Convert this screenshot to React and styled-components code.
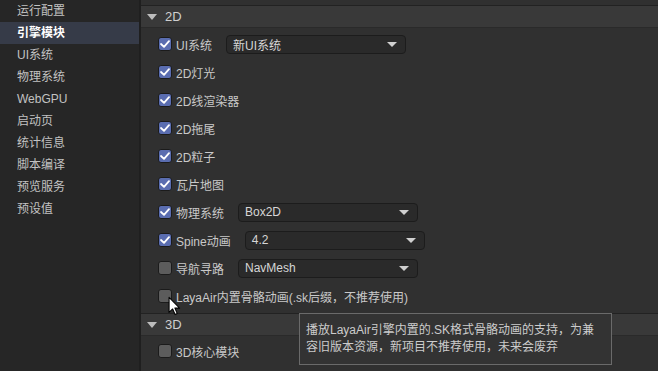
import React from "react";
import styled, { createGlobalStyle } from "styled-components";

const Global = createGlobalStyle`
  html, body { margin: 0; padding: 0; background: #303030; }
  body { font-family: "Liberation Sans", "Noto Sans CJK SC", sans-serif; font-size: 12px; }
  * { box-sizing: border-box; }
`;

const Page = styled.div`
  display: flex;
  width: 658px;
  height: 371px;
  overflow: hidden;
  background: #303030;
  position: relative;
`;

const Sidebar = styled.div`
  width: 141px;
  flex: none;
  background: #262626;
  border-right: 2px solid #1f1f1f;
  display: flex;
  flex-direction: column;
`;

const NavItem = styled.div`
  height: 22px;
  line-height: 22px;
  padding-left: 17px;
  color: ${(p) => (p.$active ? "#ffffff" : "#c2c2c2")};
  background: ${(p) => (p.$active ? "#363b48" : "transparent")};
  font-weight: ${(p) => (p.$active ? "bold" : "normal")};
`;

const Main = styled.div`
  flex: 1;
  display: flex;
  flex-direction: column;
  padding-top: 5px;
`;

const SectionHeader = styled.div`
  height: 23px;
  display: flex;
  align-items: center;
  gap: 8px;
  padding-left: 6px;
  background: #393939;
  border-top: 1px solid #222222;
  border-bottom: 1px solid #2a2a2a;
  color: #cfcfcf;
  font-size: 13px;
`;

const Rows = styled.div`
  display: flex;
  flex-direction: column;
  padding: ${(p) => p.$pad};
`;

const Row = styled.div`
  height: 28px;
  display: flex;
  align-items: center;
  padding-left: 17px;
  color: #c9c9c9;
`;

const Box = styled.span`
  width: 14px;
  height: 14px;
  border-radius: 3px;
  border: 1px solid #1b1b1b;
  background: ${(p) => (p.$on ? "#5a6db0" : "#5c5c5c")};
  display: inline-flex;
  align-items: center;
  justify-content: center;
  margin-right: 4px;
  flex: none;
`;

const Label = styled.span`
  white-space: nowrap;
`;

const Select = styled.div`
  margin-left: 14px;
  width: 180px;
  height: 19px;
  border: 1px solid #1c1c1c;
  border-radius: 4px;
  background: #2a2a2a;
  display: flex;
  align-items: center;
  justify-content: space-between;
  padding: 0 6px 0 6px;
  color: #d6d6d6;
`;

const Arrow = styled.span`
  width: 0;
  height: 0;
  border-left: 5px solid transparent;
  border-right: 5px solid transparent;
  border-top: 5px solid #d0d0d0;
  margin-right: 2px;
`;

const Tri = styled.span`
  width: 0;
  height: 0;
  border-left: 5px solid transparent;
  border-right: 5px solid transparent;
  border-top: 6px solid #bdbdbd;
`;

const Tooltip = styled.div`
  position: absolute;
  left: 299px;
  top: 313px;
  width: 313px;
  height: 52px;
  background: #333333;
  border: 1px solid #6a6a6a;
  color: #cccccc;
  padding: 8px 6px;
  line-height: 17px;
  font-size: 12px;
`;

const Cursor = styled.svg`
  position: absolute;
  left: 168px;
  top: 296px;
`;

const Check = () => (
  <svg width="10" height="8" viewBox="0 0 10 8">
    <path d="M1 4 L4 6.8 L9 1.2" fill="none" stroke="#ffffff" strokeWidth="1.8" strokeLinecap="round" strokeLinejoin="round" />
  </svg>
);

const Item = ({ on, label, select }) => (
  <Row>
    <Box $on={on}>{on && <Check />}</Box>
    <Label>{label}</Label>
    {select && (
      <Select>
        <span>{select}</span>
        <Arrow />
      </Select>
    )}
  </Row>
);

const nav = ["运行配置", "引擎模块", "UI系统", "物理系统", "WebGPU", "启动页", "统计信息", "脚本编译", "预览服务", "预设值"];

export default function App() {
  return (
    <Page>
      <Global />
      <Sidebar>
        {nav.map((n) => (
          <NavItem key={n} $active={n === "引擎模块"}>{n}</NavItem>
        ))}
      </Sidebar>
      <Main>
        <SectionHeader>
          <Tri />
          <span>2D</span>
        </SectionHeader>
        <Rows $pad="2px 0 3px 0">
          <Item on label="UI系统" select="新UI系统" />
          <Item on label="2D灯光" />
          <Item on label="2D线渲染器" />
          <Item on label="2D拖尾" />
          <Item on label="2D粒子" />
          <Item on label="瓦片地图" />
          <Item on label="物理系统" select="Box2D" />
          <Item on label="Spine动画" select="4.2" />
          <Item label="导航寻路" select="NavMesh" />
          <Item label="LayaAir内置骨骼动画(.sk后缀，不推荐使用)" />
        </Rows>
        <SectionHeader>
          <Tri />
          <span>3D</span>
        </SectionHeader>
        <Rows $pad="1px 0 0 0">
          <Item label="3D核心模块" />
        </Rows>
      </Main>
      <Cursor width="14" height="21" viewBox="0 0 13 19">
        <path d="M1 1 L1 15 L4.3 11.8 L6.6 17 L8.6 16.1 L6.4 11 L10.8 11 Z" fill="#ffffff" stroke="#000000" strokeWidth="1" strokeLinejoin="round" />
      </Cursor>
      <Tooltip>
        播放LayaAir引擎内置的.SK格式骨骼动画的支持，为兼
        <br />
        容旧版本资源，新项目不推荐使用，未来会废弃
      </Tooltip>
    </Page>
  );
}
